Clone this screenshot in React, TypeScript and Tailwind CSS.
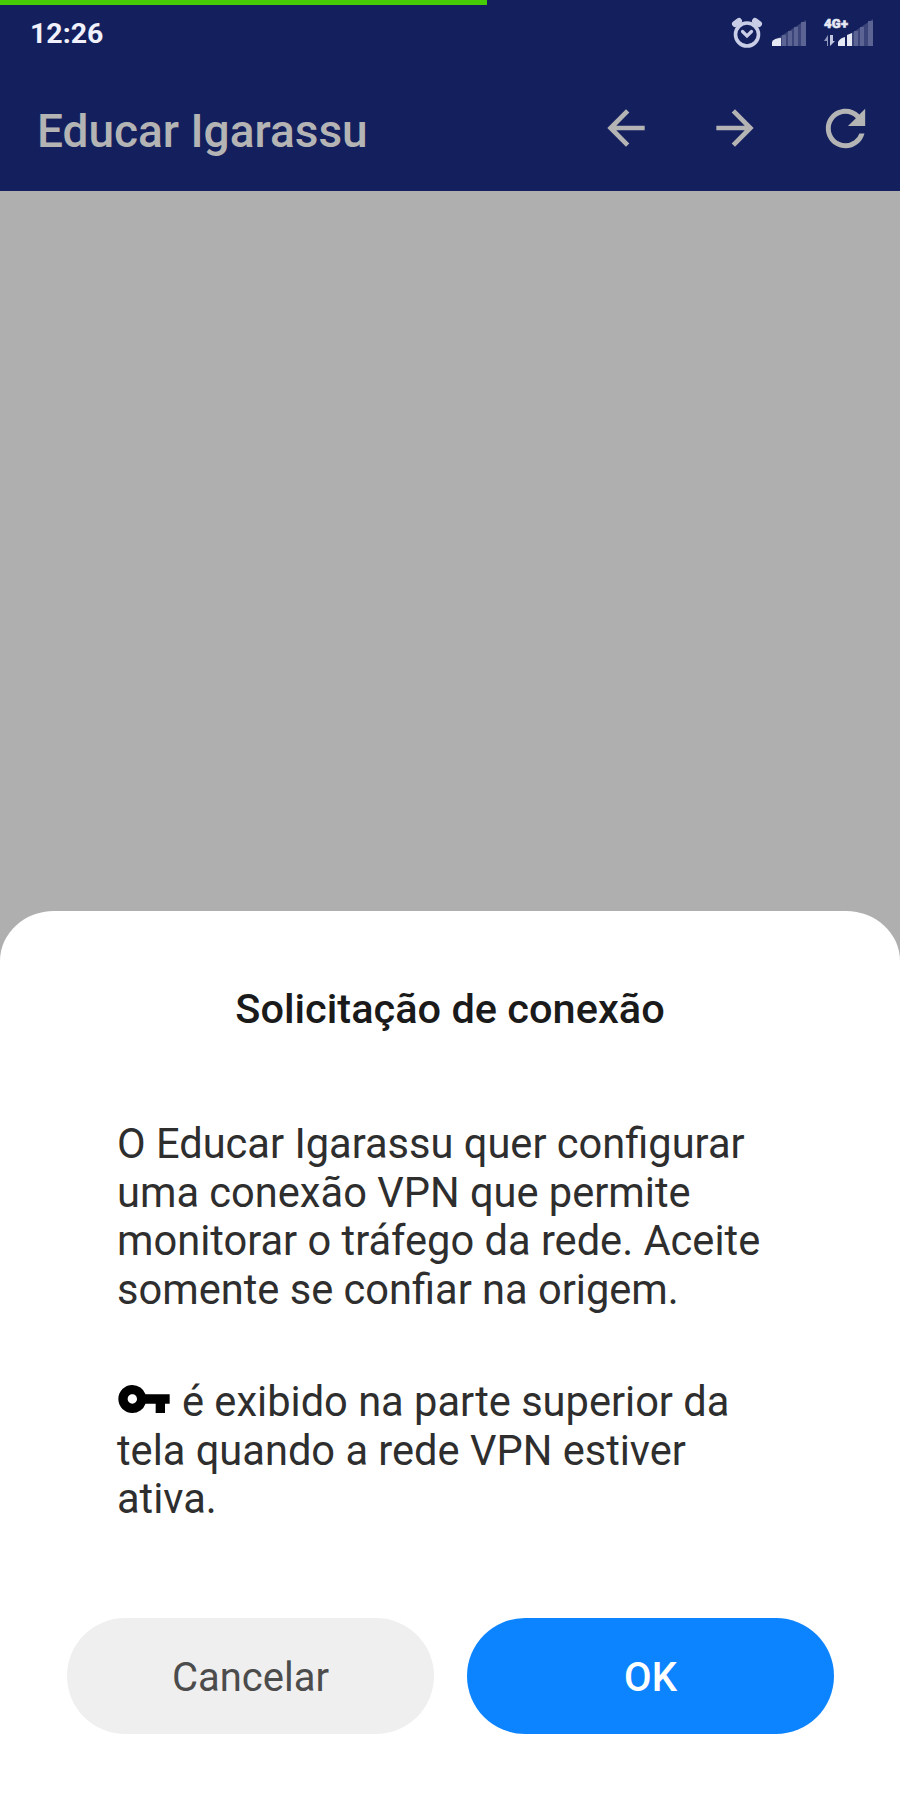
import React from 'react';
import { MdArrowBack, MdArrowForward, MdRefresh, MdVpnKey } from 'react-icons/md';

function AlarmIcon() {
  return (
    <svg width="32" height="32" viewBox="0 0 32 32" fill="none" stroke="#c9cde6" strokeLinecap="round">
      <circle cx="16" cy="17.5" r="11.5" strokeWidth="3.6" />
      <path d="M4 7 8 4M28 7 24 4" strokeWidth="6" />
      <path d="M11.5 14.5 16 19l4.5-4.5" strokeWidth="3.2" />
    </svg>
  );
}

function SignalIcon() {
  return (
    <svg width="36" height="28" viewBox="0 0 36 28">
      <path d="M6 19 34 1v26H6z" fill="#3b4579" />
      <path d="M10 16h4v11h-4zM16 12h4v15h-4zM22 8h4v19h-4zM29 3h5v24h-5z" fill="#5b6493" />
      <path d="M0 27v-4q2-4 9-4v8z" fill="#e6e8f4" />
    </svg>
  );
}

function MobileDataIcon() {
  return (
    <svg width="52" height="32" viewBox="0 0 52 32">
      <text
        x="1"
        y="11"
        fontSize="13"
        fontWeight="900"
        fill="#e6e8f4"
        stroke="#e6e8f4"
        strokeWidth="0.6"
        className="font-['Roboto']"
        textLength="24"
      >
        4G+
      </text>
      <path d="M1 24 5 18v11H4v-5z" fill="#9198bd" />
      <path d="M7 18h3v6h2l-5 5z" fill="#c2c6de" />
      <path d="M26 18 50 2v27H26z" fill="#3b4579" />
      <path d="M31 14h4v15h-4zM37 10h4v19h-4zM45 4h5v25h-5z" fill="#5b6493" />
      <path d="M15 29v-4q2-4 7-5v9zM24 29V18l5-2v13z" fill="#e6e8f4" />
    </svg>
  );
}

function StatusBar() {
  return (
    <div className="flex h-[60px] items-center pr-[25px] pb-1 pl-[30px]">
      <span className="pt-px text-[28.5px] leading-[32px] font-bold text-[#f0f1fa]">12:26</span>
      <div className="ml-auto flex items-center">
        <AlarmIcon />
        <div className="ml-[9px]">
          <SignalIcon />
        </div>
        <div className="ml-[15px]">
          <MobileDataIcon />
        </div>
      </div>
    </div>
  );
}

function Toolbar() {
  return (
    <div className="flex h-[126px] items-center pr-[25px] pl-[37px] text-[#b4b4b4]">
      <h1 className="mt-1.5 text-[46px] leading-[54px] font-medium whitespace-nowrap">Educar Igarassu</h1>
      <div className="ml-auto flex items-center gap-[53px]">
        <MdArrowBack size={56} />
        <MdArrowForward size={56} />
        <MdRefresh size={59} />
      </div>
    </div>
  );
}

function ConnectionDialog() {
  return (
    <div className="mt-auto h-[889px] rounded-t-[54px_50px] bg-white pt-[70px]">
      <h2 className="text-center text-[41.5px] leading-[56px] font-medium text-[#1a1a1a]">Solicitação de conexão</h2>

      <div className="mt-[83px] ml-[117px] text-[41.6px] leading-[48.5px] whitespace-nowrap text-[#2e2e2e]">
        <p>
          O Educar Igarassu quer configurar
          <br />
          uma conexão VPN que permite
          <br />
          monitorar o tráfego da rede. Aceite
          <br />
          somente se confiar na origem.
        </p>
        <p className="mt-[64px]">
          <MdVpnKey size={56} className="relative -top-[15px] -my-4 mr-[10px] -ml-px inline-block align-[-10px] text-black" />
          é exibido na parte superior da
          <br />
          tela quando a rede VPN estiver
          <br />
          ativa.
        </p>
      </div>

      <div className="mt-[94px] flex gap-[33px] pl-[67px]">
        <button className="h-[116px] w-[367px] rounded-full bg-[#efefef] pt-1 text-[40px] text-[#4c4c4c]">Cancelar</button>
        <button className="h-[116px] w-[367px] rounded-full bg-[#0d84ff] pt-1 text-[40px] font-medium text-white">OK</button>
      </div>
    </div>
  );
}

export default function App() {
  return (
    <div className="flex h-[1800px] w-[900px] flex-col overflow-hidden bg-[#afafaf] font-['Roboto',sans-serif]">
      <header className="h-[191px] bg-[#14205e]">
        <div className="h-[5px] w-[487px] bg-[#48cb07]" />
        <StatusBar />
        <Toolbar />
      </header>
      <ConnectionDialog />
    </div>
  );
}
